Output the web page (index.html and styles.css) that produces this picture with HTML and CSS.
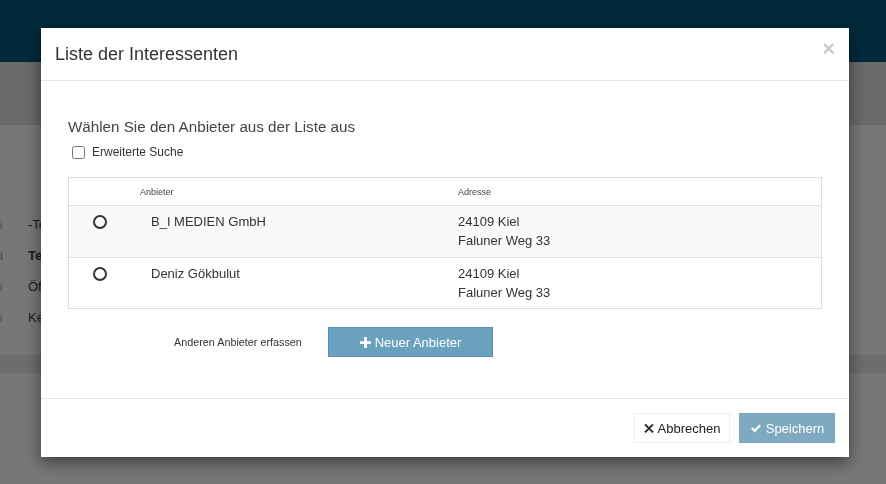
FILE: index.html
```html
<!DOCTYPE html>
<html lang="de">
<head>
  <meta charset="UTF-8">
  <meta name="viewport" content="width=device-width, initial-scale=1.0">
  <title>Liste der Interessenten</title>
  <link rel="stylesheet" href="styles.css">
</head>
<body>
  <!-- Page behind the dialog -->
  <div class="page">
    <div class="topbar"></div>
    <div class="subbar"></div>
    <div class="content">
      <ul class="bg-list">
        <li><span class="bg-icon">i</span>-Te</li>
        <li class="bold"><span class="bg-icon">i</span>Te</li>
        <li><span class="bg-icon">i</span>Öf</li>
        <li><span class="bg-icon">i</span>Ke</li>
      </ul>
    </div>
    <div class="band"></div>
    <div class="rest"></div>
  </div>

  <div class="backdrop"></div>

  <!-- Dialog -->
  <div class="modal">
    <div class="modal-header">
      <h4 class="modal-title">Liste der Interessenten</h4>
      <button class="modal-close" type="button">×</button>
    </div>

    <div class="modal-body">
      <p class="lead-text">Wählen Sie den Anbieter aus der Liste aus</p>
      <label class="check">
        <input type="checkbox">
        <span>Erweiterte Suche</span>
      </label>

      <div class="table">
        <div class="row head">
          <div class="cell pick"></div>
          <div class="cell">Anbieter</div>
          <div class="cell">Adresse</div>
        </div>
        <div class="row odd">
          <div class="cell pick"><span class="radio"></span></div>
          <div class="cell name">B_I MEDIEN GmbH</div>
          <div class="cell">24109 Kiel<br>Faluner Weg 33</div>
        </div>
        <div class="row">
          <div class="cell pick"><span class="radio"></span></div>
          <div class="cell name">Deniz Gökbulut</div>
          <div class="cell">24109 Kiel<br>Faluner Weg 33</div>
        </div>
      </div>

      <div class="new-row">
        <span class="new-label">Anderen Anbieter erfassen</span>
        <button class="btn btn-blue" type="button">
          <svg class="ico" viewBox="0 0 12 12" width="11" height="11"><path d="M4.5 0h3v4.5H12v3H7.5V12h-3V7.5H0v-3h4.5z" fill="#fff"/></svg>
          Neuer Anbieter
        </button>
      </div>
    </div>

    <div class="modal-footer">
      <button class="btn btn-default" type="button">
        <svg class="ico" viewBox="0 0 12 12" width="10" height="10"><path d="M2 1.5L6 5.5L10 1.5L11 2.5L7 6.5L11 10.5L10 11.5L6 7.5L2 11.5L1 10.5L5 6.5L1 2.5z" fill="#222" stroke="#222" stroke-width="1.2" stroke-linejoin="round"/></svg>
        Abbrechen
      </button>
      <button class="btn btn-save" type="button">
        <svg class="ico" viewBox="0 0 14 12" width="12" height="11"><path d="M1.2 6.4L3 4.6L5.4 7L11 1.4L12.8 3.2L5.4 10.6z" fill="#fff"/></svg>
        Speichern
      </button>
    </div>
  </div>
</body>
</html>
```

FILE: styles.css
```css
body {
  margin: 0;
  font-family: "Liberation Sans", Arial, Helvetica, sans-serif;
  color: #333;
  overflow: hidden;
}

/* Page behind */
.page {
  display: flex;
  flex-direction: column;
  height: 484px;
}

.topbar {
  height: 62px;
  background: #005474;
}

.subbar {
  height: 63px;
  background: #d2d2d2;
}

.content {
  height: 230px;
  background: #eeeeee;
}

.bg-list {
  list-style: none;
  margin: 0;
  padding: 84px 0 0 0;
  font-size: 13px;
  color: #3a3a3a;
}

.bg-list li {
  height: 31px;
  display: flex;
  align-items: center;
}

.bg-list li.bold {
  font-weight: bold;
}

.bg-icon {
  width: 28px;
  color: #999;
  font-size: 11px;
}

.band {
  height: 18px;
  background: #dadada;
}

.rest {
  flex: 1;
  background: #eeeeee;
}

/* Overlay */
.backdrop {
  position: fixed;
  top: 0;
  left: 0;
  width: 100%;
  height: 100%;
  background: rgba(0, 0, 0, 0.5);
}

/* Dialog */
.modal {
  position: fixed;
  top: 28px;
  left: 41px;
  width: 808px;
  background: #fff;
  box-shadow: 0 5px 15px rgba(0, 0, 0, 0.5);
}

.modal-header {
  display: flex;
  align-items: center;
  justify-content: space-between;
  height: 52px;
  padding: 0 14px;
  border-bottom: 1px solid #e5e5e5;
}

.modal-title {
  margin: 0;
  font-size: 18px;
  font-weight: normal;
  color: #333;
}

.modal-close {
  border: none;
  background: none;
  padding: 0;
  margin-top: -10px;
  font-size: 22px;
  font-weight: bold;
  font-family: "Liberation Sans", Arial, sans-serif;
  color: #000;
  opacity: 0.2;
  cursor: pointer;
}

.modal-body {
  padding: 36px 27px 41px 27px;
}

.lead-text {
  margin: 0;
  font-size: 15.2px;
  line-height: 20px;
  color: #444;
}

.check {
  display: flex;
  align-items: center;
  gap: 7px;
  margin: 8px 0 0 4px;
  font-size: 12px;
  color: #333;
}

.check input {
  margin: 0;
  width: 13px;
  height: 13px;
}

/* Table */
.table {
  margin-top: 18px;
  border: 1px solid #dddddd;
}

.row {
  display: grid;
  grid-template-columns: 71px 318px 1fr;
  border-top: 1px solid #dddddd;
  font-size: 13px;
  line-height: 19px;
  color: #333;
}

.row.head {
  border-top: none;
  height: 27px;
  align-items: center;
  font-size: 9px;
  line-height: 12px;
  color: #444;
}

.row.odd {
  background: #f9f9f9;
}

.row .cell {
  padding: 6px 0 7px 0;
}

.row:last-child .cell {
  padding-bottom: 6px;
}

.row.head .cell {
  padding: 0;
}

.row .cell.name {
  padding-left: 11px;
}

.cell.pick {
  padding: 9px 0 0 24px;
}

.radio {
  display: block;
  width: 10px;
  height: 10px;
  border: 2px solid #333;
  border-radius: 50%;
}

/* New provider line */
.new-row {
  display: flex;
  align-items: center;
  margin-top: 18px;
  padding-left: 106px;
}

.new-label {
  font-size: 10.8px;
  color: #333;
  width: 154px;
}

/* Buttons */
.btn {
  display: inline-flex;
  align-items: center;
  justify-content: center;
  gap: 4px;
  height: 30px;
  border: 1px solid transparent;
  font-family: "Liberation Sans", Arial, sans-serif;
  font-size: 13px;
  cursor: pointer;
}

.btn-blue {
  width: 165px;
  background: #6aa1bf;
  border-color: #5d8ea9;
  color: #fff;
}

.modal-footer {
  display: flex;
  justify-content: flex-end;
  gap: 9px;
  padding: 14px 14px 14px 0;
  border-top: 1px solid #e5e5e5;
}

.btn-default {
  width: 96px;
  background: #fff;
  border-color: #eeeeee;
  color: #222;
}

.btn-save {
  width: 96px;
  background: #7fa9bf;
  border-color: #7fa9bf;
  color: #fff;
}
```
